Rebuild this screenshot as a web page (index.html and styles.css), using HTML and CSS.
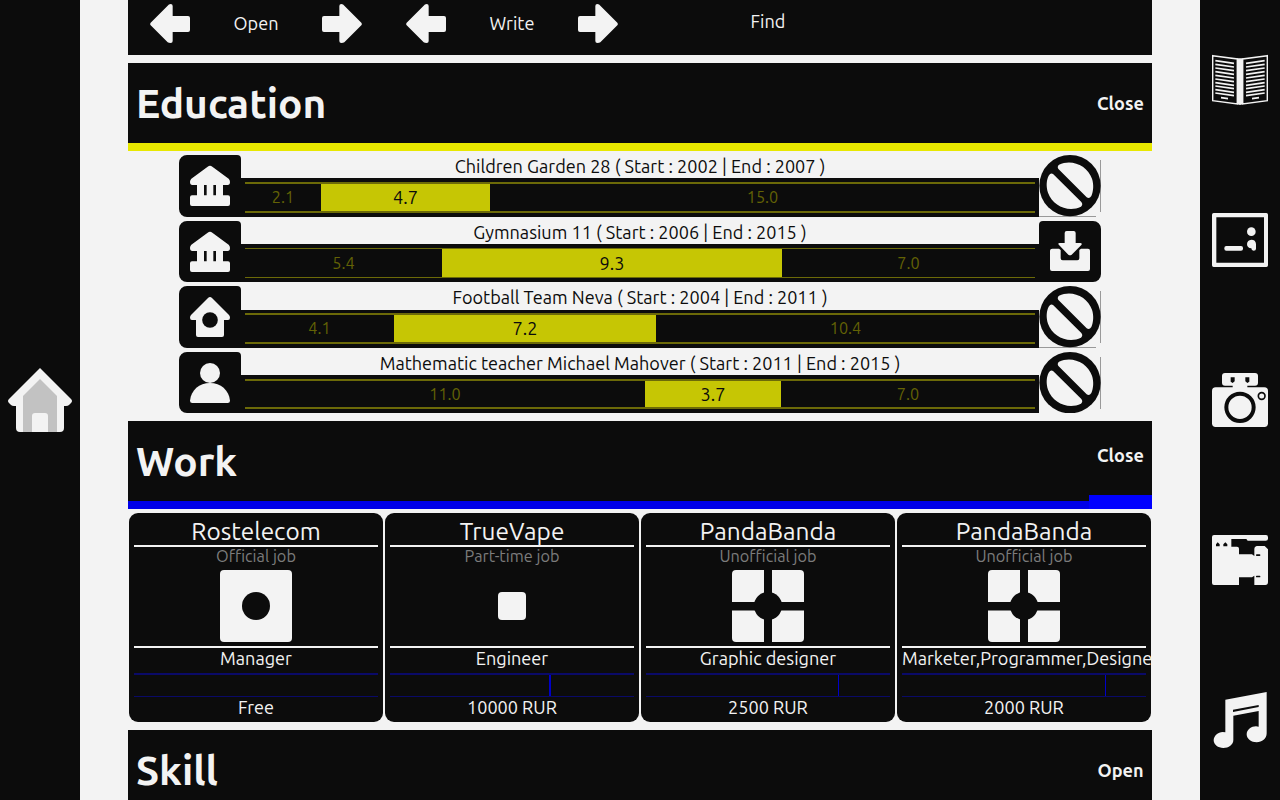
FILE: index.html
```html
<!DOCTYPE html>
<html lang="en">
<head>
<meta charset="utf-8">
<title>Profile</title>
<link rel="stylesheet" href="styles.css">
</head>
<body>
<svg class="defs" aria-hidden="true">
  <symbol id="arrow" viewBox="66 12 120 120"><path d="M68 68Q65 72 68 76L119 127Q122 129 128 129Q134 129 134 123V96H180Q186 96 186 90V54Q186 48 180 48H134V18Q134 12 128 12Q122 12 119 17Z"/></symbol>
  <symbol id="bank" viewBox="27 15 186 186"><path d="M113 50Q120 45 127 50L176 86Q180 90 180 96Q180 105 173 105H159V136H174Q180 136 180 142V162Q180 168 174 168H66Q60 168 60 162V142Q60 136 66 136H81V105H67Q60 105 60 96Q60 90 64 86Z"/><path class="cut" d="M102 105h8v31h-8zM130 105h8v31h-8z"/></symbol>
  <symbol id="house" viewBox="27 18 186 186"><path d="M114 54Q120 48 126 54L177 105Q180 108 180 113Q180 120 174 120H162V165Q162 171 156 171H84Q78 171 78 165V120H66Q60 120 60 113Q60 108 63 105Z"/><circle class="cut" cx="120" cy="120" r="23.5"/></symbol>
  <symbol id="person" viewBox="27 216 186 186"><circle cx="120" cy="279" r="30"/><path d="M60 362C63 330 88 309 120 309S177 330 180 362Q180 369 173 369H67Q60 369 60 362Z"/></symbol>
  <symbol id="ban" viewBox="237 15 186 186"><circle class="cut" cx="330" cy="107" r="92"/><path d="M297 44C335 26 382 46 396 86C402 105 400 123 394 138Q388 148 380 142L296 58Q290 50 297 44ZM363 170C325 188 278 168 264 128C258 109 259 91 266 77Q273 66 280 73L364 156Q370 164 363 170Z"/></symbol>
  <symbol id="download" viewBox="237 213 186 186"><path d="M314 249Q314 243 320 243H341Q347 243 347 249V279H361Q368 280 364 285L335 314Q330 318 325 314L297 285Q292 279 299 279H314Z"/><path d="M277 296H297L302 300V325Q302 331 308 331H352Q358 331 358 325V300L363 296H384Q390 296 390 302V357Q390 363 384 363H276Q270 363 270 357V302Q270 296 277 296Z"/></symbol>
</svg>

<div class="page">
  <aside class="side side-left">
    <svg width="64" height="64" viewBox="0 0 64 64">
      <path d="M32 0L63 31Q65 33 63 35L61 37Q60 38 58 38H56V60Q56 64 52 64H12Q8 64 8 60V38H6Q4 38 3 37L1 35Q-1 33 1 31Z"/>
      <path class="wall" d="M32 11L49 28V64H40V48Q40 45 37 45H27Q24 45 24 48V64H15V28Z"/>
    </svg>
  </aside>

  <main class="main">
    <nav class="filters">
      <div class="switcher"><svg class="arrow"><use href="#arrow"/></svg><span>Open</span><svg class="arrow flip"><use href="#arrow"/></svg></div>
      <div class="switcher"><svg class="arrow"><use href="#arrow"/></svg><span>Write</span><svg class="arrow flip"><use href="#arrow"/></svg></div>
      <div class="find">Find</div>
    </nav>

    <header class="section yellow"><h1>Education</h1><button class="toggle">Close</button></header>
    <div class="rows">
      <div class="row row1">
        <span class="kind"><svg><use href="#bank"/></svg></span>
        <div class="info"><p>Children Garden 28 ( Start : 2002 | End : 2007 )</p>
          <div class="line"><div class="track"><span style="width:76px">2.1</span><b style="width:169px">4.7</b><span style="width:545px">15.0</span></div></div></div>
        <span class="action ban"><svg><use href="#ban"/></svg></span>
      </div>
      <div class="row row2">
        <span class="kind"><svg><use href="#bank"/></svg></span>
        <div class="info"><p>Gymnasium 11 ( Start : 2006 | End : 2015 )</p>
          <div class="line"><div class="track"><span style="width:197px">5.4</span><b style="width:340px">9.3</b><span style="width:253px">7.0</span></div></div></div>
        <span class="action"><svg><use href="#download"/></svg></span>
      </div>
      <div class="row row3">
        <span class="kind"><svg><use href="#house"/></svg></span>
        <div class="info"><p>Football Team Neva ( Start : 2004 | End : 2011 )</p>
          <div class="line"><div class="track"><span style="width:149px">4.1</span><b style="width:262px">7.2</b><span style="width:379px">10.4</span></div></div></div>
        <span class="action ban"><svg><use href="#ban"/></svg></span>
      </div>
      <div class="row row4">
        <span class="kind"><svg><use href="#person"/></svg></span>
        <div class="info"><p>Mathematic teacher Michael Mahover ( Start : 2011 | End : 2015 )</p>
          <div class="line"><div class="track"><span style="width:400px">11.0</span><b style="width:136px">3.7</b><span style="width:254px">7.0</span></div></div></div>
        <span class="action ban"><svg><use href="#ban"/></svg></span>
      </div>
    </div>

    <header class="section blue"><h1>Work</h1><button class="toggle active">Close</button></header>
    <div class="cards">
      <article class="card">
        <h2>Rostelecom</h2><p class="type">Official job</p>
        <svg class="pic" viewBox="0 0 72 72"><rect width="72" height="72" rx="4"/><circle class="cut" cx="36" cy="36" r="14"/></svg>
        <p class="role">Manager</p><div class="span"></div><p class="pay">Free</p>
      </article>
      <article class="card">
        <h2>TrueVape</h2><p class="type">Part-time job</p>
        <svg class="pic" viewBox="0 0 72 72"><rect x="22" y="22" width="28" height="28" rx="4"/></svg>
        <p class="role">Engineer</p><div class="span"><i style="margin-left:159px;width:2px"></i></div><p class="pay">10000 RUR</p>
      </article>
      <article class="card">
        <h2>PandaBanda</h2><p class="type">Unofficial job</p>
        <svg class="pic" viewBox="0 0 72 72"><rect width="72" height="72" rx="4"/><path class="cut" d="M32 0h8v72h-8zM0 32h72v8.500H0z"/><circle class="cut" cx="36" cy="36" r="14"/></svg>
        <p class="role">Graphic designer</p><div class="span"><i style="margin-left:192px;width:1px"></i></div><p class="pay">2500 RUR</p>
      </article>
      <article class="card">
        <h2>PandaBanda</h2><p class="type">Unofficial job</p>
        <svg class="pic" viewBox="0 0 72 72"><rect width="72" height="72" rx="4"/><path class="cut" d="M32 0h8v72h-8zM0 32h72v8.500H0z"/><circle class="cut" cx="36" cy="36" r="14"/></svg>
        <p class="role long">Marketer,Programmer,Designer</p><div class="span"><i style="margin-left:203px;width:1px"></i></div><p class="pay">2000 RUR</p>
      </article>
    </div>

    <header class="section"><h1>Skill</h1><button class="toggle">Open</button></header>
  </main>

  <aside class="side side-right">
    <div><svg viewBox="51 36 168 168">
      <path class="stroke" stroke-width="4.500" d="M53 47L127 57V192L53 182ZM217 47L143 57V192L217 182Z"/><path d="M127 55h16v138l-8 2-8-2z"/>
      <path class="stroke" stroke-width="5" d="M61 62l56 8M61 73l56 8M61 84l56 8M61 95l56 8M61 106l56 8M61 117l56 8M61 128l56 8M61 138l56 8M61 149l56 8M61 159l56 8M209 62l-56 8M209 73l-56 8M209 84l-56 8M209 95l-56 8M209 106l-56 8M209 117l-56 8M209 128l-56 8M209 138l-56 8M209 149l-56 8M209 159l-56 8M78 173l21 3M192 173l-21 3"/>
    </svg></div>
    <div><svg viewBox="51 516 168 168">
      <path fill-rule="evenodd" d="M56 519H214Q219 519 219 524V676Q219 681 214 681H56Q51 681 51 676V524Q51 519 56 519ZM64 532V668H207V532Z"/><rect x="88" y="618" width="56" height="14" rx="6"/><circle cx="169" cy="575" r="13"/><path d="M169 599Q182 599 183 612V626Q183 632 176 632Q169 632 169 625Q156 624 156 612Q157 600 169 599Z"/>
    </svg></div>
    <div><svg viewBox="51 36 168 168">
      <rect x="51" y="82" width="168" height="119" rx="11"/><rect x="81" y="39" width="108" height="38" rx="9"/><path d="M113 70h44v18h-44z"/><path class="cut" d="M107 52h12v12l-6 5-6-4zM151 52h12v13l-6 4-6-5z"/><circle cx="135" cy="142" r="41" fill="none" stroke="#0c0c0c" stroke-width="12"/><circle cx="200" cy="108" r="10" fill="none" stroke="#0c0c0c" stroke-width="5"/>
    </svg></div>
    <div><svg viewBox="51 516 168 168">
      <path d="M57 525H213Q219 525 219 532V536Q219 542 212 542H158L154 537H109V560H126Q132 560 132 566V583H171L178 588V566Q178 560 185 558H209L219 568V666Q219 675 211 675H178V647L171 652H132V675H57Q51 675 51 669V531Q51 525 57 525Z"/><path class="cut" d="M63 559v-6l5-6 6 6v6zM85 559v-6l6-6 6 6v6z"/><rect class="cut" x="183" y="583" width="13" height="5" rx="2"/><rect class="cut" x="183" y="647" width="13" height="5" rx="2"/>
    </svg></div>
    <div><svg viewBox="51 36 168 168">
      <path d="M91 59L215 36V160C215 176 201 187 185 187S155 177 155 163S169 139 183 139L191 140V93L115 107V180C115 194 101 204 85 204S56 194 56 181S69 156 83 156L91 157Z"/><path class="cut" d="M114 89L191 75V81L114 96Z"/>
    </svg></div>
  </aside>
</div>
</body>
</html>
```
FILE: styles.css
```css
* { box-sizing: border-box; }
body {
  margin: 0;
  height: 800px;
  overflow: hidden;
  background: #f3f3f3;
  color: #f3f3f3;
  font: 18.08px/20px Ubuntu, "Noto Sans", "Open Sans", sans-serif;
}
h1, h2, p { margin: 0; font-weight: 400; }
svg { display: block; fill: #f3f3f3; }
.defs { position: absolute; width: 0; height: 0; }
.cut { fill: #0c0c0c; }
.stroke { fill: none; stroke: #f3f3f3; }
.wall { fill: #c2c2c2; }

.page { display: flex; justify-content: space-between; height: 800px; }
.side { width: 80px; height: 800px; background: #0c0c0c; display: flex; }
.side-left { align-items: center; justify-content: center; }
.side-right { flex-direction: column; }
.side-right div { height: 160px; display: flex; align-items: center; justify-content: center; }
.side-right svg { width: 56px; height: 56px; }

.main { width: 1024px; }
.filters { display: flex; height: 55px; background: #0c0c0c; margin-bottom: 8px; }
.switcher { width: 256px; height: 48px; padding: 0 22px; display: flex; align-items: center; justify-content: space-between; }
.switcher span { padding-bottom: 2px; }
.arrow { width: 40px; height: 40px; }
.flip { transform: scaleX(-1); }
.find { width: 256px; text-align: center; line-height: 42px; }

.section { position: relative; display: flex; justify-content: space-between; height: 88px; background: #0c0c0c; border-bottom: 8px solid #0c0c0c; }
.section h1 { padding-left: 8px; font-size: 40.68px; line-height: 81px; font-weight: 700; }
.yellow { border-color: #e8e800; }
.blue { border-color: #0000e8; }
.toggle { width: 63px; height: 80px; padding: 0; border: 0; background: none; color: inherit; font: inherit; font-weight: 700; text-align: center; }
.toggle.active { height: 88px; margin-bottom: -8px; padding-bottom: 6px; border-bottom: 14px solid #00f; }

.rows { width: 922px; margin: 4px auto 8px; display: grid; gap: 4px; }
.row { --h: 62px; --title: 23px; --bar: 2px; display: flex; height: var(--h); }
.row2 { --h: 61px; --bar: 1px; }
.row3 { --title: 24px; }
.row4 { --h: 61px; }
.kind, .action { width: 62px; height: var(--h); background: #0c0c0c; overflow: hidden; display: flex; align-items: center; }
.kind { border-radius: 8px 4px 0 8px; }
.action { border-radius: 4px 8px 8px 0; }
.row svg { width: 62px; height: 62px; flex: none; }
/* Hairlines along the right and bottom edges stop short of the corners. */
.ban {
  border-radius: 0;
  background:
    linear-gradient(#999, #999) 61px 5px / 1px 52px no-repeat,
    linear-gradient(#999, #999) 0 61px / 57px 1px no-repeat;
}
.info { width: 798px; color: #0c0c0c; text-align: center; }
.info p { height: var(--title); line-height: 23px; white-space: nowrap; }
.line { height: calc(var(--h) - var(--title)); padding: 4px; background: #0c0c0c; }
.row3 .line { padding-top: 3px; }
.track { display: flex; height: 100%; border: solid #6c6a08; border-width: var(--bar) 0; line-height: 26px; }
.track span { color: #636205; font-size: 16.27px; line-height: 27px; }
.track b { background: #c6c604; font-weight: 400; }
.row2 .track { line-height: 28px; }
.row2 .track span { line-height: 29px; }

.cards { display: grid; grid-template-columns: repeat(4, 254px); gap: 2px; padding: 4px 1px 8px; }
.card { height: 209px; padding: 5px; border-radius: 9px; background: #0c0c0c; text-align: center; white-space: nowrap; overflow: hidden; }
.card h2 { height: 29px; border-bottom: 2px solid #f3f3f3; font-size: 24.4px; line-height: 27px; }
.type { height: 23px; line-height: 19px; font-size: 16.27px; color: #7c7c7c; }
.pic { width: 72px; height: 72px; margin: 0 auto 4px; }
.role { height: 27px; border-top: 2px solid #f3f3f3; line-height: 20px; }
.long { text-align: left; }
.span { height: 24px; border: solid #0a0a68; border-width: 2px 0 1px; }
.span i { display: block; height: 21px; background: #0000c8; }
.pay { line-height: 21px; }
```
